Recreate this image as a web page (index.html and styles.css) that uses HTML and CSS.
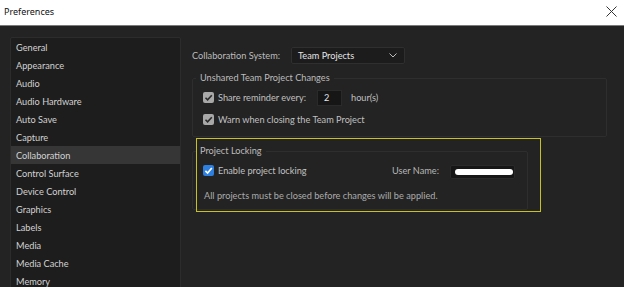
FILE: index.html
```html
<!DOCTYPE html>
<html>
<head>
<meta charset="utf-8">
<link rel="stylesheet" href="styles.css">
</head>
<body>
<div class="window">
  <div class="titlebar">
    <span class="title">Preferences</span>
    <svg class="close" width="11" height="11" viewBox="0 0 11 11"><path d="M0.5 0.5 L10.5 10.5 M10.5 0.5 L0.5 10.5" stroke="#333" stroke-width="1" fill="none"/></svg>
  </div>
  <div class="main">
    <ul class="nav">
      <li>General</li>
      <li>Appearance</li>
      <li>Audio</li>
      <li>Audio Hardware</li>
      <li>Auto Save</li>
      <li>Capture</li>
      <li class="active">Collaboration</li>
      <li>Control Surface</li>
      <li>Device Control</li>
      <li>Graphics</li>
      <li>Labels</li>
      <li>Media</li>
      <li>Media Cache</li>
      <li>Memory</li>
    </ul>
    <div class="content">
      <div class="row system">
        <span class="label">Collaboration System:</span>
        <div class="select">
          <span>Team Projects</span>
          <svg width="8" height="5" viewBox="0 0 8 5"><path d="M0.5 0.5 L4 4 L7.5 0.5" stroke="#bbb" stroke-width="1" fill="none"/></svg>
        </div>
      </div>
      <fieldset class="group unshared">
        <legend>Unshared Team Project Changes</legend>
        <div class="row check-row">
          <span class="check gray"><svg width="11" height="11" viewBox="0 0 11 11"><path d="M2.5 5.8 L4.6 7.9 L8.8 3.2" stroke="#2a2a2a" stroke-width="1.6" fill="none"/></svg></span>
          <span class="text share">Share reminder every:</span>
          <span class="num">2</span>
          <span class="text unit">hour(s)</span>
        </div>
        <div class="row check-row">
          <span class="check gray"><svg width="11" height="11" viewBox="0 0 11 11"><path d="M2.5 5.8 L4.6 7.9 L8.8 3.2" stroke="#2a2a2a" stroke-width="1.6" fill="none"/></svg></span>
          <span class="text">Warn when closing the Team Project</span>
        </div>
      </fieldset>
      <div class="locking-wrap">
        <fieldset class="group locking">
          <legend>Project Locking</legend>
          <div class="row lock-row">
            <span class="lock-left">
              <span class="check blue"><svg width="11" height="11" viewBox="0 0 11 11"><path d="M2.4 5.8 L4.6 8 L8.8 3" stroke="#fff" stroke-width="1.7" fill="none"/></svg></span>
              <span class="text">Enable project locking</span>
            </span>
            <span class="user-label">User Name:</span>
            <span class="user-input"><span class="redact"></span></span>
          </div>
          <p class="note">All projects must be closed before changes will be applied.</p>
        </fieldset>
        <div class="highlight"></div>
      </div>
    </div>
  </div>
</div>
</body>
</html>
```
FILE: styles.css
```css
* { box-sizing: border-box; }
html, body { margin: 0; padding: 0; }
body {
  width: 624px;
  height: 287px;
  overflow: hidden;
  background: #232323;
  font-family: Lato, "Open Sans", sans-serif;
  font-size: 9.2px;
  color: #c4c4c4;
  white-space: nowrap;
}
.titlebar {
  height: 26px;
  background: #ffffff;
  border-bottom: 1px solid #7a7a7a;
  display: flex;
  align-items: center;
  justify-content: space-between;
  padding: 0 7px 2px 4px;
}
.title {
  font-family: "Noto Sans", sans-serif;
  font-size: 9px;
  color: #111;
}
.main {
  display: flex;
  padding: 11px 0 0 10px;
}
.nav {
  list-style: none;
  margin: 0;
  padding: 0;
  width: 171px;
  height: 300px;
  background: #1d1d1d;
  border: 1px solid #2c2c2c;
  border-radius: 2px;
  flex: none;
}
.nav li {
  height: 18px;
  line-height: 17px;
  padding: 1px 0 0 5px;
  color: #d2d2d2;
}
.nav li.active { background: #363636; }
.content {
  flex: 1;
  padding: 10px 0 0 11px;
  display: flex;
  flex-direction: column;
}
.row { display: flex; align-items: center; }
.system { height: 17px; }
.label { width: 99px; color: #bcbcbc; }
.select {
  width: 114px;
  height: 17px;
  background: #1c1c1c;
  border: 1px solid #2f2f2f;
  border-radius: 2px;
  display: flex;
  align-items: center;
  justify-content: space-between;
  padding: 0 7px 0 6px;
  color: #e4e4e4;
}
.group {
  margin: 0;
  border: 1px solid #2e2e2e;
  border-radius: 2px;
  padding: 0 10px 0 10px;
}
.group legend {
  padding: 0 4px;
  margin-left: -7px;
  color: #bcbcbc;
  line-height: 14px;
}
.unshared {
  margin-top: 7px;
  width: 415px;
  height: 66px;
}
.check-row { height: 11px; margin-top: 7px; }
.check-row + .check-row { margin-top: 11px; }
.check {
  width: 11px;
  height: 11px;
  border-radius: 2px;
  flex: none;
  display: flex;
  margin-right: 4px;
}
.check.gray { background: #a8a8a8; }
.check.blue { background: #2d7fe0; }
.text { color: #c0c0c0; }
.share { width: 99px; }
.num {
  width: 25px;
  height: 16px;
  background: #161616;
  border: 1px solid #2a2a2a;
  padding-left: 6px;
  color: #e6e6e6;
  line-height: 14px;
}
.unit { margin-left: 9px; }
.locking-wrap {
  position: relative;
  margin-top: 7px;
}
.locking {
  width: 336px;
  height: 66px;
}
.lock-row { margin-top: 6px; height: 12px; }
.lock-left { display: flex; align-items: center; width: 189px; }
.user-label { color: #b6b6b6; width: 58px; }
.user-input {
  width: 65px;
  height: 14px;
  background: #161616;
  border: 1px solid #2a2a2a;
  border-radius: 2px;
  margin-top: 3px;
  display: flex;
  align-items: center;
  padding-left: 4px;
}
.redact {
  width: 58px;
  height: 6px;
  background: #ffffff;
  border-radius: 3px;
}
.note {
  margin: 14px 0 0 1px;
  color: #ababab;
}
.highlight {
  position: absolute;
  left: 4px;
  top: -6px;
  width: 345px;
  height: 74px;
  border: 1.5px solid #c9c21c;
  pointer-events: none;
}
```
